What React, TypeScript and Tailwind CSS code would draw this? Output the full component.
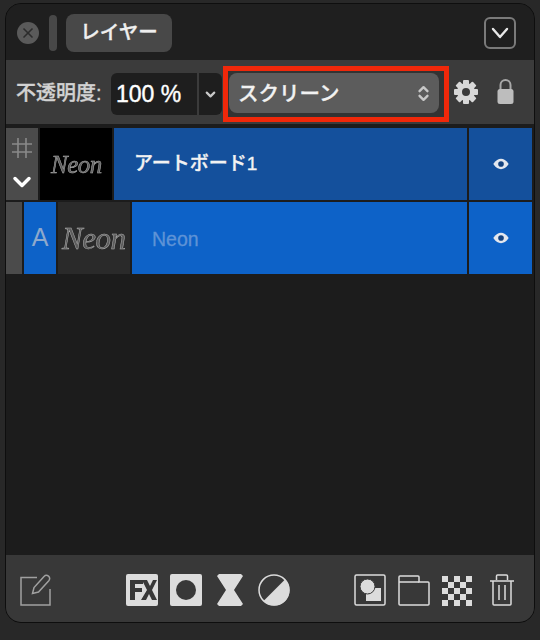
import React from 'react';
import { ChevronDown, ChevronsUpDown, X } from 'lucide-react';

const jp = "font-['Liberation_Sans','Noto_Sans_CJK_JP',sans-serif] font-medium [-webkit-text-stroke:0.35px_currentColor]";

const NeonLogo = ({ className }: { className: string }) => (
    <span className={`font-['Liberation_Serif',serif] italic leading-none tracking-[-0.5px] text-[#5c5c5c] [-webkit-text-stroke:0.5px_#b0b0b0] [will-change:transform] ${className}`}>
        Neon
    </span>
);

const Eye = () => (
    <svg width="18" height="12" viewBox="0 0 20 14">
        <path d="M1 7C4 2.600 7 1 10 1s6 1.600 9 6c-3 4.400-6 6-9 6s-6-1.600-9-6z" fill="#e3e7ee" />
        <circle cx="10" cy="7" r="3.300" fill="#14427f" />
    </svg>
);

const Gear = () => (
    <svg width="24" height="24" viewBox="0 0 24 24" fill="#d8d8d8" className="mt-[20px] ml-[5px]">
        {[0, 45, 90, 135, 180, 225, 270, 315].map((a) => (
            <rect key={a} x="9" y="0" width="6" height="6" rx="1" transform={`rotate(${a} 12 12)`} />
        ))}
        <circle cx="12" cy="12" r="6.500" fill="none" stroke="#d8d8d8" strokeWidth="5" />
    </svg>
);

const Toolbar = () => (
    <div className="flex h-[64px] shrink-0 items-start bg-[#3b3b3b] pl-[10px]">
        <span className={`${jp} mt-[23px] w-[95px] text-[20px] leading-5 whitespace-nowrap text-[#d2d2d2]`}>不透明度:</span>
        <div className="mt-[13px] flex h-[42px] w-[86px] items-center rounded-l-md bg-[#1e1e1e] pl-[5px] font-['Liberation_Sans',sans-serif] text-[23px] font-medium text-white [-webkit-text-stroke:0.4px_currentColor]">
            100 %
        </div>
        <div className="mt-[13px] ml-[2px] flex h-[42px] w-[23px] items-center justify-center rounded-r-md bg-[#1e1e1e]">
            <ChevronDown size={15} strokeWidth={3.500} className="text-[#c8c8c8]" />
        </div>
        <div className="mt-[6px] ml-px flex h-[56px] w-[226px] items-start border-[5px] border-[#f0280a] bg-[#333333] pt-[2px] pl-px">
            <div className={`${jp} flex h-[40px] w-[210px] items-center justify-between rounded-lg bg-[#5c5c5c] pr-[6px] pl-[9px] text-[20.500px] text-[#f2f2f2]`}>
                <span className="pt-[3px]">スクリーン</span>
                <ChevronsUpDown size={19} strokeWidth={3} className="text-[#c8c8c8]" />
            </div>
        </div>
        <Gear />
        <svg width="17" height="26" viewBox="0 0 17 26" className="mt-[18px] ml-[19px]">
            <path d="M3.500 12V7a5 5 0 0 1 10 0v5" fill="none" stroke="#a8a8a8" strokeWidth="2" />
            <rect x="0.500" y="11" width="16" height="15" rx="2.500" fill="#bdbdbd" />
        </svg>
    </div>
);

const Layers = () => (
    <div className="flex flex-1 flex-col gap-[2px] bg-[#1c1c1c] pt-[4px]">
        <div className="flex h-[72px] gap-[2px]">
            <div className="flex w-[32px] flex-col items-center bg-[#4b4b4b] pt-[10px]">
                <svg width="20" height="20" viewBox="0 0 20 20" stroke="#8a8a8a" strokeWidth="1.600">
                    <path d="M6 0v20M14 0v20M0 6h20M0 14h20" />
                </svg>
                <ChevronDown size={28} strokeWidth={3} className="mt-[10px] text-white" />
            </div>
            <div className="flex w-[72px] items-center justify-center bg-black">
                <NeonLogo className="text-[25px]" />
            </div>
            <div className={`${jp} flex w-[353px] items-center bg-[#14509c] pl-[20px] text-[19px] text-[#f2f2f2]`}>アートボード1</div>
            <div className="flex w-[63px] items-center justify-center bg-[#14509c]"><Eye /></div>
        </div>
        <div className="flex h-[72px] gap-[2px]">
            <div className="w-[16px] bg-[#4b4b4b]" />
            <div className="flex w-[32px] items-center justify-center bg-[#0d62c8] font-['Liberation_Sans',sans-serif] text-[25px] text-[#8ea9cc]">A</div>
            <div className="flex w-[72px] items-center justify-center bg-[#2a2a2a]">
                <NeonLogo className="text-[31px]" />
            </div>
            <div className="flex w-[335px] items-center bg-[#0d62c8] pt-[3px] pl-[20px] font-['Liberation_Sans',sans-serif] text-[19.500px] font-medium text-[#5f93d6] [-webkit-text-stroke:0.3px_currentColor]">Neon</div>
            <div className="flex w-[63px] items-center justify-center bg-[#0d62c8]"><Eye /></div>
        </div>
    </div>
);

const Checker = () => (
    <svg width="30" height="30" viewBox="0 0 30 30" className="mt-[2px] ml-[12px]" fill="#dcdcdc">
        {Array.from({ length: 25 }).map((_, i) =>
            (i % 5 + Math.floor(i / 5)) % 2 === 0 ? (
                <rect key={i} x={(i % 5) * 6} y={Math.floor(i / 5) * 6} width="6" height="6" />
            ) : null,
        )}
    </svg>
);

const Footer = () => (
    <div className="flex h-[67px] shrink-0 items-start bg-[#383838] pt-[19px] pl-[14px]">
        <svg width="32" height="32" viewBox="0 0 32 32" fill="none" stroke="#a0a0a0" strokeWidth="1.500">
            <path d="M17 3.500H1V31h29V15" />
            <path d="M12.500 19.500l1.500-6L24 2.500c1.500-1.500 3-1.500 4.500-.3s1.500 3 .3 4.500L18.500 18z" />
        </svg>
        <svg width="32" height="32" viewBox="0 0 32 32" className="ml-[74px]">
            <rect width="32" height="32" rx="2" fill="#dcdcdc" />
            <path d="M4 6h13v4H9v4h7v4H9v8H4zM16 6h5l3 6 3-6h4l-5 10 5 10h-5l-3-6-3 6h-5l6-10z" fill="#383838" />
        </svg>
        <svg width="32" height="32" viewBox="0 0 32 32" className="ml-[12px]">
            <rect width="32" height="32" rx="2" fill="#dcdcdc" />
            <circle cx="16" cy="16" r="10" fill="#383838" />
        </svg>
        <svg width="26" height="32" viewBox="0 0 26 32" className="ml-[15px]">
            <path d="M2 0h22l2 2-9 14 9 14-2 2H2l-2-2 9-14L0 2z" fill="#dcdcdc" />
        </svg>
        <svg width="32" height="32" viewBox="0 0 32 32" className="ml-[15px]">
            <circle cx="16" cy="16" r="15" fill="#383838" stroke="#dcdcdc" strokeWidth="1.500" />
            <path d="M27 5.500A15 15 0 0 1 5.500 27z" fill="#dcdcdc" />
        </svg>
        <svg width="32" height="32" viewBox="0 0 32 32" className="ml-[64px]">
            <rect x="1" y="1" width="30" height="30" rx="1.500" fill="none" stroke="#dcdcdc" strokeWidth="1.500" />
            <path d="M15 14h12v13H12V20h3z" fill="#dcdcdc" />
            <circle cx="13.500" cy="12.500" r="7.500" fill="#dcdcdc" stroke="#383838" strokeWidth="1" />
        </svg>
        <svg width="32" height="32" viewBox="0 0 32 32" fill="none" stroke="#dcdcdc" strokeWidth="1.500" className="ml-[12px]">
            <path d="M1 30V3a1 1 0 0 1 1-1h18a1 1 0 0 1 1 1v5h9a1 1 0 0 1 1 1v21a1 1 0 0 1-1 1H2a1 1 0 0 1-1-1z" />
            <path d="M1 8h20" />
        </svg>
        <Checker />
        <svg width="24" height="32" viewBox="0 0 24 32" fill="none" stroke="#dcdcdc" strokeWidth="1.500" className="ml-[18px]">
            <path d="M0 7h24M6.500 6V2a1 1 0 0 1 1-1h9a1 1 0 0 1 1 1v4M3 7v23a1 1 0 0 0 1 1h16a1 1 0 0 0 1-1V7M9 11v15M15 11v15" />
        </svg>
    </div>
);

export default function App() {
    return (
        <div className="h-[640px] w-[540px] bg-[#282828] pt-[3px] pr-[5px] pb-[17px] pl-[5px]">
            <div className="flex h-[620px] flex-col overflow-hidden rounded-[16px] border border-[#0e0e0e] bg-[#1c1c1c]">
                <div className="flex h-[56px] shrink-0 items-start bg-[#1f1f1f] pt-[10px] pl-[11px]">
                    <div className="mt-[8px] flex h-[22px] w-[22px] items-center justify-center rounded-full bg-[#5a5a5a]">
                        <X size={16} strokeWidth={2.500} className="text-[#2c2c2c]" />
                    </div>
                    <div className="mt-px ml-[10px] h-[36px] w-[8px] rounded-[4px] bg-[#484848]" />
                    <div className={`${jp} ml-[9px] flex h-[38px] w-[106px] items-center justify-center rounded-lg bg-[#484848] text-[19.500px] text-[#efefef]`}>
                        レイヤー
                    </div>
                    <div className="mt-[3px] mr-[18px] ml-auto flex h-[32px] w-[32px] items-center justify-center rounded-md border-2 border-[#7a7a7a]">
                        <svg width="18" height="12" viewBox="0 0 18 12" fill="none" stroke="#e8e8e8" strokeWidth="2.400" strokeLinecap="round" strokeLinejoin="round">
                            <path d="M2 2l7 8 7-8" />
                        </svg>
                    </div>
                </div>
                <Toolbar />
                <Layers />
                <Footer />
            </div>
        </div>
    );
}
